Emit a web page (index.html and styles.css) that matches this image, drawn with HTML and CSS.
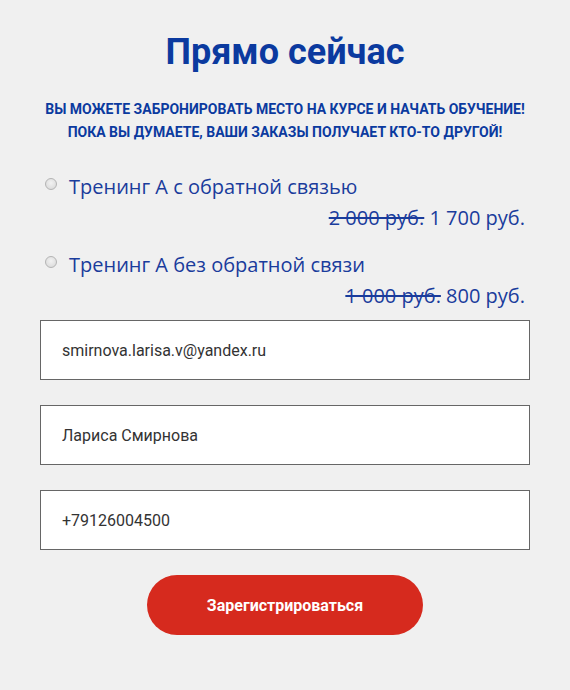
FILE: index.html
```html
<!DOCTYPE html>
<html>

    <head>
        <link rel="stylesheet" href="styles.css">
    </head>

    <body>
        <div class="form-box">
            <h1>Прямо сейчас</h1>
            <p class="lead">Вы можете забронировать место на курсе и начать обучение!<br>
            Пока вы думаете, ваши заказы получает кто-то другой!</p>

            <label class="option">
                <span class="option-title"><input type="radio" name="plan">Тренинг А с обратной связью</span>
                <span class="price"><s>2 000 руб.</s> 1 700 руб.</span>
            </label>
            <label class="option">
                <span class="option-title"><input type="radio" name="plan">Тренинг А без обратной связи</span>
                <span class="price"><s>1 000 руб.</s> 800 руб.</span>
            </label>

            <input class="field" type="text" value="smirnova.larisa.v@yandex.ru">
            <input class="field" type="text" value="Лариса Смирнова">
            <input class="field" type="text" value="+79126004500">

            <button class="submit">Зарегистрироваться</button>
        </div>
    </body>

</html>
```

FILE: styles.css
```css
body {
    margin: 0;
    background: #f0f0f0;
    font-family: Roboto, "Liberation Sans", sans-serif;
}
.form-box {
    width: 490px;
    margin: 0 auto;
    display: flex;
    flex-direction: column;
}
h1 {
    margin: 30px 0 0;
    font-size: 36px;
    line-height: 44px;
    font-weight: 700;
    color: #0b3a9f;
    text-align: center;
}
.lead {
    margin: 24px 0 28px;
    font-size: 14px;
    line-height: 23px;
    font-weight: 700;
    text-transform: uppercase;
    color: #0b3a9f;
    text-align: center;
}
.option {
    display: flex;
    flex-direction: column;
    font-family: "Open Sans", sans-serif;
    font-size: 20px;
    line-height: 30px;
    color: #1a3c9c;
    margin-bottom: 17px;
}
.option:last-of-type {
    margin-bottom: 9px;
}
.option input {
    appearance: none;
    -webkit-appearance: none;
    box-sizing: border-box;
    width: 12px;
    height: 12px;
    margin: 0 12px 0 5px;
    border: 1px solid #b4b4b4;
    border-radius: 50%;
    background: radial-gradient(circle at 50% 40%, #f2f2f2, #d6d6d6);
    vertical-align: 4px;
}
.price {
    text-align: right;
    padding-right: 5px;
    margin-top: 1px;
}
.price s {
    text-decoration-thickness: 2px;
}
.field {
    height: 60px;
    box-sizing: border-box;
    border: 1px solid #666;
    background: #fff;
    padding: 0 21px;
    font-family: Roboto, sans-serif;
    font-size: 16px;
    color: #333;
    margin-bottom: 25px;
}
.submit {
    align-self: center;
    width: 276px;
    height: 60px;
    border: 0;
    border-radius: 30px;
    background: #d62a1e;
    color: #fff;
    font-family: Roboto, sans-serif;
    font-weight: 700;
    font-size: 16px;
}
```
